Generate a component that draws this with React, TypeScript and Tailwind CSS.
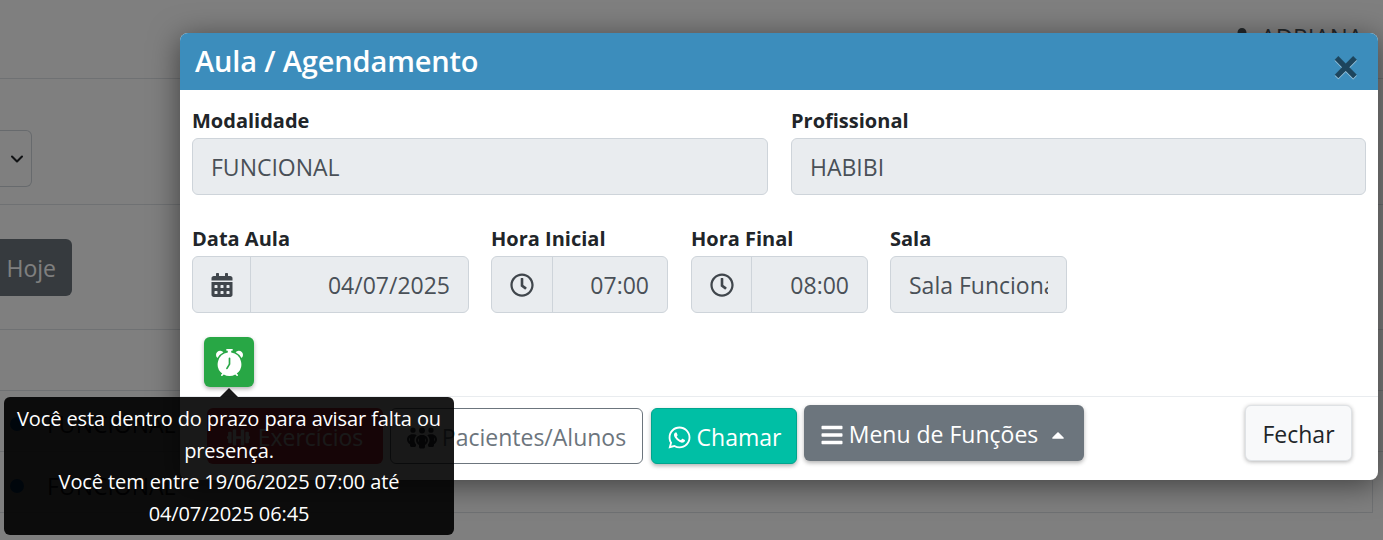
import { BsAlarmFill } from "react-icons/bs";
import { FaBars, FaCalendarAlt, FaCaretUp, FaDumbbell, FaRegClock, FaUser, FaWhatsapp } from "react-icons/fa";
import { FaPeopleGroup } from "react-icons/fa6";
import { ChevronDown } from "lucide-react";
import type { ReactNode } from "react";

const font = "font-['Open_Sans','Noto_Sans',sans-serif]";

function Field({ label, className, children }: { label: string; className: string; children: ReactNode }) {
  return (
    <div className={className}>
      <div className="h-[33px] text-[20px] leading-[32px] font-bold text-[#212529]">{label}</div>
      {children}
    </div>
  );
}

function PlainInput({ value }: { value: string }) {
  return (
    <div className="flex h-[57px] items-center rounded-md border border-[#ced4da] bg-[#e9ecef] px-[18px] pt-px text-[23px] text-[#495057]">
      <span className="overflow-hidden whitespace-nowrap">{value}</span>
    </div>
  );
}

function AddonInput({ icon, value, addonWidth }: { icon: ReactNode; value: string; addonWidth: string }) {
  return (
    <div className="flex h-[57px] rounded-md border border-[#ced4da] bg-[#e9ecef] text-[23px] text-[#495057]">
      <div className={`flex items-center justify-center border-r border-[#ced4da] text-[24px] text-[#40464c] ${addonWidth}`}>{icon}</div>
      <div className="flex flex-1 items-center justify-end pt-px pr-[18px]">{value}</div>
    </div>
  );
}

export default function App() {
  return (
    <div className={`relative h-[540px] w-[1383px] overflow-hidden bg-white ${font}`}>
      {/* page behind the modal */}
      <div className="flex h-[79px] justify-end border-b border-[#dee2e6] pt-[19px] pr-[20px] text-[24px] text-[#495057]">
        <div className="flex items-center gap-[9px] self-start">
          <FaUser className="text-[18px]" />
          <span>ADRIANA</span>
        </div>
      </div>
      <div className="h-[126px] border-b border-[#dee2e6] pt-[51px]">
        <div className="flex h-[57px] w-[32px] items-center justify-end rounded-r-md border border-l-0 border-[#ced4da] pr-[4px] text-[#212529]">
          <ChevronDown size={20} strokeWidth={2.5} />
        </div>
      </div>
      <div className="h-[125px] border-b border-[#dee2e6] pt-[34px]">
        <div className="flex h-[57px] w-[72px] items-center justify-end rounded-r-md bg-[#6c757d] pt-[2px] pr-[16px] text-[23px] text-white">Hoje</div>
      </div>
      <div className="h-[61px] border-b border-[#dee2e6]" />
      <div className="flex h-[61px] items-center gap-[23px] border-b border-[#dee2e6] pt-[6px] pl-[10px] text-[23px] text-[#212529]">
        <span className="h-[14px] w-[14px] rounded-full bg-[#007bff]" />
        <span>FUNCIONAL</span>
      </div>
      <div className="flex h-[61px] w-[1373px] items-center gap-[23px] border-r border-b border-[#dee2e6] pt-[8px] pl-[10px] text-[23px] text-[#212529]">
        <span className="h-[14px] w-[14px] rounded-full bg-[#007bff]" />
        <span>FUNCIONAL</span>
      </div>

      <div className="absolute inset-0 bg-black/50" />

      {/* modal */}
      <div className="absolute top-[33px] left-[180px] flex h-[447px] w-[1198px] flex-col rounded-lg bg-white shadow-[0_5px_30px_rgba(0,0,0,0.5)]">
        <div className="flex h-[57px] items-center justify-between rounded-t-lg bg-[#3c8dbc] pr-[18px] pl-[15px]">
          <h1 className="pb-[2px] text-[29px] font-semibold tracking-[-0.15px] text-white">Aula / Agendamento</h1>
          <span className="mt-[8px] text-[50px] leading-none font-bold text-black opacity-50 [text-shadow:0_1px_0_#fff]">×</span>
        </div>

        <div className="flex h-[306px] flex-col px-[12px] pt-[15px]">
          <div className="flex gap-[23px]">
            <Field label="Modalidade" className="w-[576px]">
              <PlainInput value="FUNCIONAL" />
            </Field>
            <Field label="Profissional" className="w-[575px]">
              <PlainInput value="HABIBI" />
            </Field>
          </div>
          <div className="mt-[28px] flex gap-[22px]">
            <Field label="Data Aula" className="w-[277px]">
              <AddonInput icon={<FaCalendarAlt />} value="04/07/2025" addonWidth="w-[58px]" />
            </Field>
            <Field label="Hora Inicial" className="mr-px w-[177px]">
              <AddonInput icon={<FaRegClock />} value="07:00" addonWidth="w-[61px]" />
            </Field>
            <Field label="Hora Final" className="w-[177px]">
              <AddonInput icon={<FaRegClock />} value="08:00" addonWidth="w-[60px]" />
            </Field>
            <Field label="Sala" className="w-[177px]">
              <PlainInput value="Sala Funcional" />
            </Field>
          </div>
          <button className="mt-[24px] ml-[12px] flex h-[50px] w-[50px] items-center justify-center rounded-md bg-[#28a745] pt-px text-[27px] text-white shadow-[0_2px_4px_rgba(0,0,0,0.3)]">
            <BsAlarmFill />
          </button>
        </div>

        <div className="flex flex-1 items-start border-t border-[#e9ecef] pl-[27px] text-[23px]">
          <button className="mt-[11px] flex h-[56px] w-[176px] items-center justify-center gap-2 rounded-md bg-[#dc3545] pt-[3px] text-white">
            <FaDumbbell />
            Exercícios
          </button>
          <button className="mt-[11px] ml-[7px] flex h-[56px] w-[253px] items-center justify-center gap-[5px] rounded-md border border-[#6c757d] bg-white pt-[3px] text-[#6c757d]">
            <FaPeopleGroup className="text-[30px] text-[#343a40]" />
            Pacientes/Alunos
          </button>
          <button className="mt-[11px] ml-[8px] flex h-[56px] w-[146px] items-center justify-center gap-[5px] rounded-md border border-[#00a58e] bg-[#00bfa5] pt-[3px] text-white shadow-[0_2px_4px_rgba(0,0,0,0.3)]">
            <FaWhatsapp className="text-[25px]" />
            Chamar
          </button>
          <button className="mt-[8px] ml-[7px] flex h-[56px] w-[280px] items-center justify-center gap-[5px] rounded-md bg-[#6c757d] pt-[3px] text-white shadow-[0_2px_4px_rgba(0,0,0,0.3)]">
            <FaBars className="text-[24px]" />
            Menu de Funções
            <FaCaretUp className="ml-[5px] text-[20px]" />
          </button>
          <button className="mt-[8px] mr-[26px] ml-auto h-[56px] w-[107px] rounded-md border border-[#dfe2e5] bg-[#f8f9fa] pt-[3px] text-[#212529] shadow-[0_1px_4px_rgba(0,0,0,0.3)]">
            Fechar
          </button>
        </div>
      </div>

      {/* tooltip over the alarm button */}
      <div className="absolute top-[397px] left-[4px] w-[450px] rounded-md bg-black/90 px-[8px] py-[6px] text-center text-[20px] leading-[31.5px] tracking-[-0.1px] text-white">
        <div className="absolute -top-[9px] left-[216px] h-0 w-0 border-x-[9px] border-b-[9px] border-x-transparent border-b-black/90" />
        <p>Você esta dentro do prazo para avisar falta ou presença.</p>
        <p>Você tem entre 19/06/2025 07:00 até 04/07/2025 06:45</p>
      </div>
    </div>
  );
}
